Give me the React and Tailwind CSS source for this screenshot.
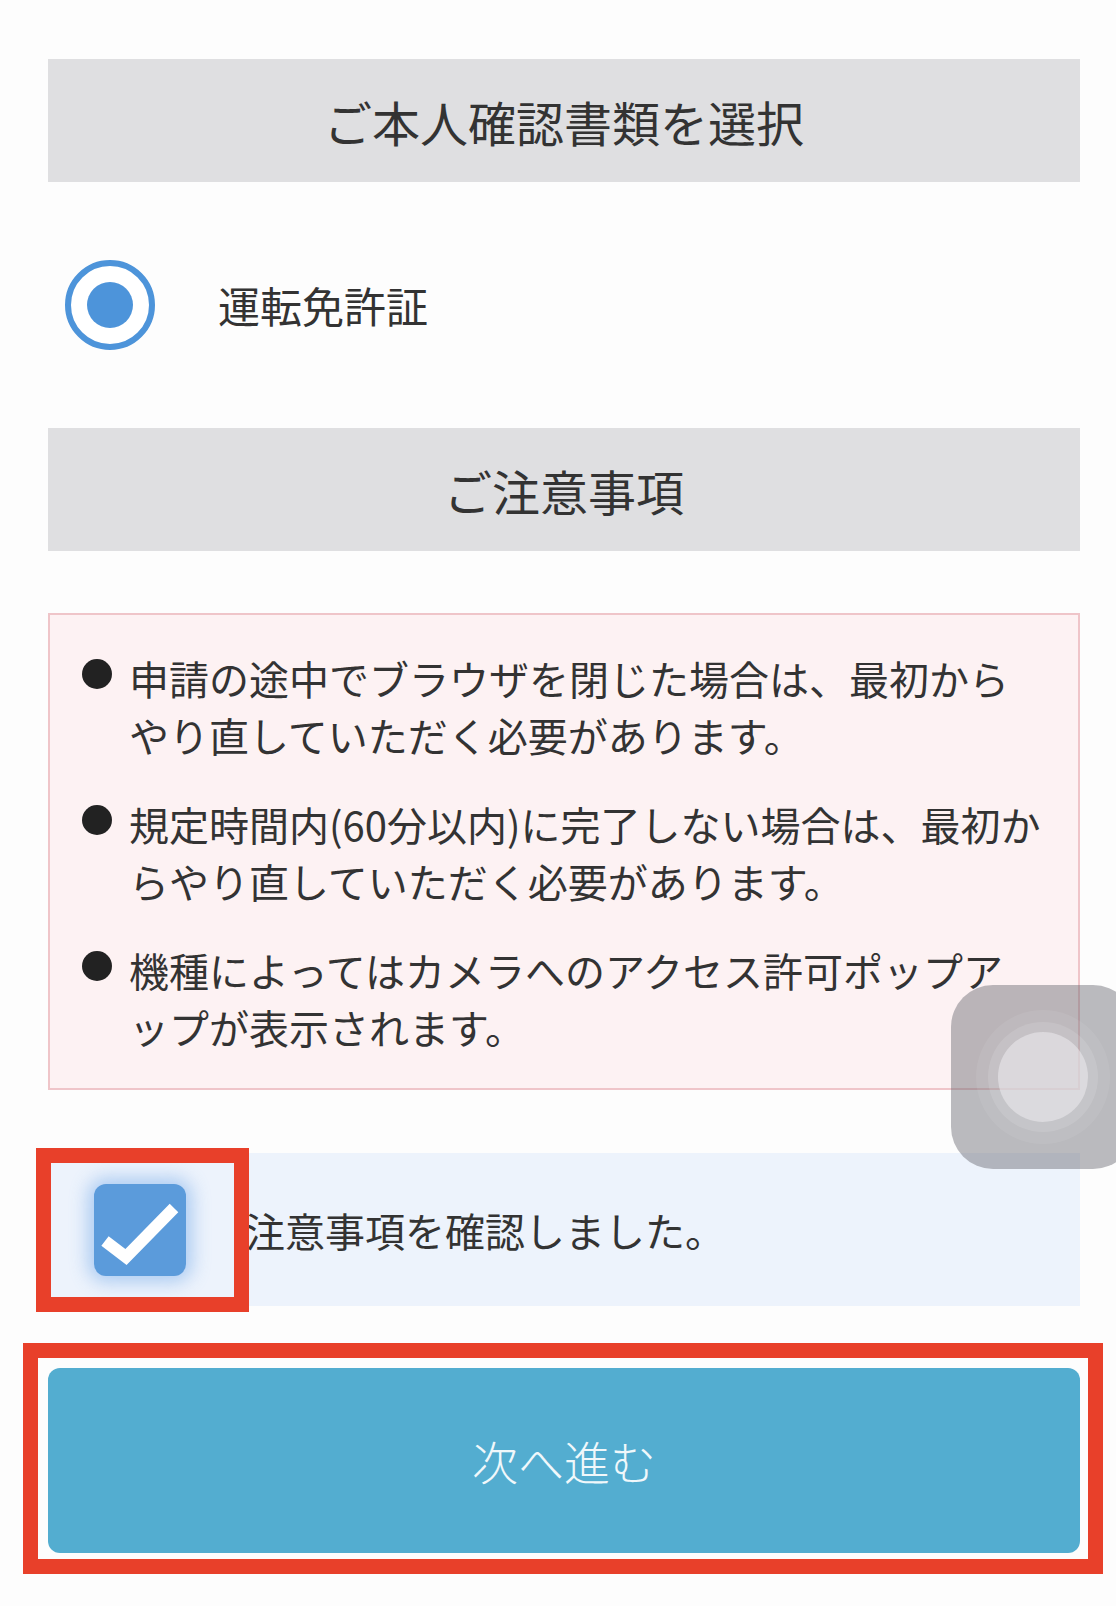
import React from "react";

// lines are split as they wrap on the device
const notes = [
  ["申請の途中でブラウザを閉じた場合は、最初から", "やり直していただく必要があります。"],
  ["規定時間内(60分以内)に完了しない場合は、最初か", "らやり直していただく必要があります。"],
  ["機種によってはカメラへのアクセス許可ポップア", "ップが表示されます。"],
];

function SectionTitle({ children }) {
  return (
    <div className="flex h-[123px] items-center justify-center bg-[#dfdfe1] text-[48px] leading-none text-[#333]">
      {children}
    </div>
  );
}

export default function App() {
  return (
    <div className="relative min-h-[1606px] w-full overflow-hidden bg-[#fdfdfd] font-['Noto_Sans_CJK_JP','Noto_Sans',sans-serif] text-[#333]">
      <div className="pl-[48px] pr-[36px] pt-[59px]">
        <SectionTitle>ご本人確認書類を選択</SectionTitle>

        {/* document radio */}
        <div className="flex items-center py-[78px] pl-[17px]">
          <div className="flex h-[90px] w-[90px] items-center justify-center rounded-full border-[6px] border-[#4d94da] bg-white">
            <div className="h-[46px] w-[46px] rounded-full bg-[#4d94da]" />
          </div>
          <div className="ml-[63px] text-[42px] leading-none">運転免許証</div>
        </div>

        <SectionTitle>ご注意事項</SectionTitle>

        {/* notes */}
        <div className="mt-[62px] border-2 border-[#efc5c9] bg-[#fdf2f3] pb-[32px] pl-[32px] pr-[30px] pt-[35px]">
          <ul className="flex flex-col gap-[32px]">
            {notes.map((n) => (
              <li key={n[0]} className="flex items-start">
                <div className="mt-[9px] h-[30px] w-[30px] shrink-0 rounded-full bg-[#222]" />
                <div className="ml-[17px] whitespace-nowrap text-[40px] leading-[57px]">
                  {n.map((line) => (
                    <div key={line}>{line}</div>
                  ))}
                </div>
              </li>
            ))}
          </ul>
        </div>

        {/* confirm checkbox */}
        <div className="mt-[63px] flex h-[153px] items-center bg-[#edf3fc]">
          <div className="ml-[46px] flex h-[92px] w-[92px] shrink-0 items-center justify-center rounded-[12px] bg-[#5b9bdb] shadow-[0_0_18px_6px_rgba(90,155,230,0.45)]">
            <svg width="92" height="92" viewBox="0 0 92 92">
              <polyline points="11,57 32,73 80,24" fill="none" stroke="#fff" strokeWidth="12" />
            </svg>
          </div>
          <div className="ml-[59px] text-[40px] leading-none">注意事項を確認しました。</div>
        </div>

        <button className="mt-[62px] flex h-[185px] w-full items-center justify-center rounded-[12px] bg-[#53add0] text-[46px] font-light text-[#f0f8fb]">
          次へ進む
        </button>
      </div>

      {/* annotation frames */}
      <div className="absolute left-[36px] top-[1148px] h-[164px] w-[213px] border-[15px] border-[#e8402a]" />
      <div className="absolute left-[23px] top-[1343px] h-[231px] w-[1080px] border-[15px] border-[#e8402a]" />

      {/* floating touch button */}
      <div className="absolute left-[951px] top-[985px] flex h-[184px] w-[184px] items-center justify-center rounded-[42px] bg-[rgba(105,105,112,0.45)]">
        <div className="flex h-[134px] w-[134px] items-center justify-center rounded-full bg-[rgba(255,255,255,0.07)]">
          <div className="flex h-[110px] w-[110px] items-center justify-center rounded-full bg-[rgba(255,255,255,0.12)]">
            <div className="h-[90px] w-[90px] rounded-full bg-[rgba(236,235,238,0.55)]" />
          </div>
        </div>
      </div>
    </div>
  );
}
